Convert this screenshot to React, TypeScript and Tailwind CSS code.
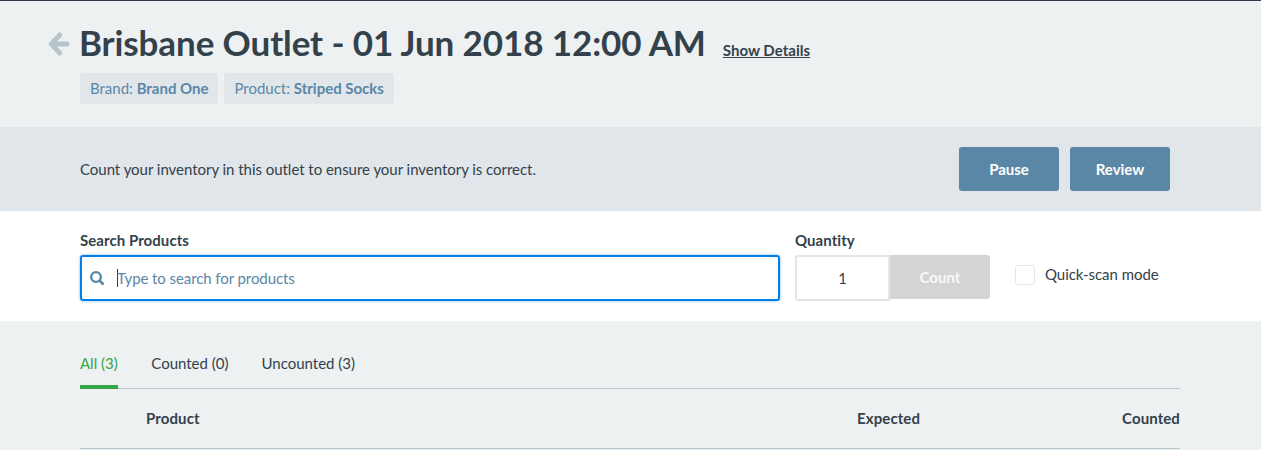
function ArrowLeft() {
  return (
    <svg className="mt-px mr-[9px] h-6 w-[22px] shrink-0" viewBox="0 0 22 24" fill="none" stroke="#b6c5cb" strokeWidth="4.8" strokeLinecap="round" strokeLinejoin="miter">
      <path d="M11.8 2.9 3.3 12l8.5 9.1M4 12h15" />
    </svg>
  );
}

function SearchIcon() {
  return (
    <svg className="h-[14px] w-[14px] overflow-visible" viewBox="0 0 14 14" fill="none" stroke="#5b87a7" strokeLinecap="round">
      <circle cx="6" cy="6" r="4.8" strokeWidth="2.3" />
      <path d="m9.8 9.8 2.9 2.9" strokeWidth="2.7" />
    </svg>
  );
}

function Tag({ label, value }: { label: string; value: string }) {
  return (
    <span className="flex h-[31px] items-center rounded-[3px] bg-[#e1e6ea] px-[10px] pb-[2px] text-[15px] tracking-[-0.01px] whitespace-pre text-[#5b87a7]">
      {label}: <b className="font-bold">{value}</b>
    </span>
  );
}

export default function App() {
  return (
    <div className="h-[450px] w-[1261px] overflow-hidden bg-[#eef1f2] font-['Lato',sans-serif] text-[15px] leading-[20px] text-[#33414b]">
      <header className="h-[127px] border-t border-[#2f3b49] pl-[48px]">
        <div className="flex h-[72px] items-center pt-[13px]">
          <ArrowLeft />
          <h1 className="-mt-[4px] text-[35px] font-bold tracking-[-0.11px] whitespace-nowrap">Brisbane Outlet - 01 Jun 2018 12:00 AM</h1>
          <a className="mt-[12px] ml-[17px] font-bold tracking-[0.02px] underline">Show Details</a>
        </div>
        <div className="ml-[32px] flex gap-[6px]">
          <Tag label="Brand" value="Brand One" />
          <Tag label="Product" value="Striped Socks" />
        </div>
      </header>
      <section className="flex h-[84px] items-center bg-[#e1e6ea] pr-[91px] pl-[80px]">
        <p className="flex-1 tracking-[-0.035px]">Count your inventory in this outlet to ensure your inventory is correct.</p>
        <button className="mr-[11px] h-[44px] w-[100px] rounded-[3px] bg-[#5b87a7] font-bold text-white">Pause</button>
        <button className="h-[44px] w-[100px] rounded-[3px] bg-[#5b87a7] font-bold text-white">Review</button>
      </section>
      <section className="flex h-[110px] bg-white pt-[19px] pl-[80px]">
        <div className="w-[700px]">
          <div className="mb-[5px] font-bold tracking-[0.06px]">Search Products</div>
          <div className="flex h-[46px] items-center rounded-[3px] border-2 border-[#0080e6] pl-[8px] text-[#5b87a7] shadow-[0_0_3px_rgba(0,128,230,0.5)]">
            <SearchIcon />
            <span className="-mr-px ml-[13px] h-[18px] w-px bg-[#2f3e4a]" />
            <span className="tracking-[-0.08px]">Type to search for products</span>
          </div>
        </div>
        <div className="ml-[15px]">
          <div className="mb-[5px] font-bold tracking-[0.06px]">Quantity</div>
          <div className="flex">
            <div className="flex h-[46px] w-[95px] items-center justify-center rounded-l-[3px] border-2 border-[#e1e6ea]">1</div>
            <button className="h-[44px] w-[100px] rounded-r-[3px] bg-[#d4d4d4] font-bold text-[#f8f8f8]">Count</button>
          </div>
        </div>
        <label className="mt-[35px] ml-[25px] flex h-[20px] items-center gap-[10px] tracking-[-0.05px]">
          <span className="h-5 w-5 rounded-[3px] border border-[#e1e6ea]" />
          <span className="-mt-[2px]">Quick-scan mode</span>
        </label>
      </section>
      <main className="ml-[80px] w-[1100px] pt-[32px]">
        <nav className="flex h-[36px] border-b border-[#b5c4cd]">
          <span className="mr-[33.5px] h-[36px] border-b-4 border-[#34a744] text-[#34a744]">All (3)</span>
          <span className="mr-[33px]">Counted (0)</span>
          <span>Uncounted (3)</span>
        </nav>
        <div className="flex h-[60px] items-center border-b border-[#b5c4cd] pb-[2px] font-bold tracking-[0.1px]">
          <span className="ml-[66px] w-[711px]">Product</span>
          <span>Expected</span>
          <span className="ml-auto">Counted</span>
        </div>
      </main>
    </div>
  );
}
